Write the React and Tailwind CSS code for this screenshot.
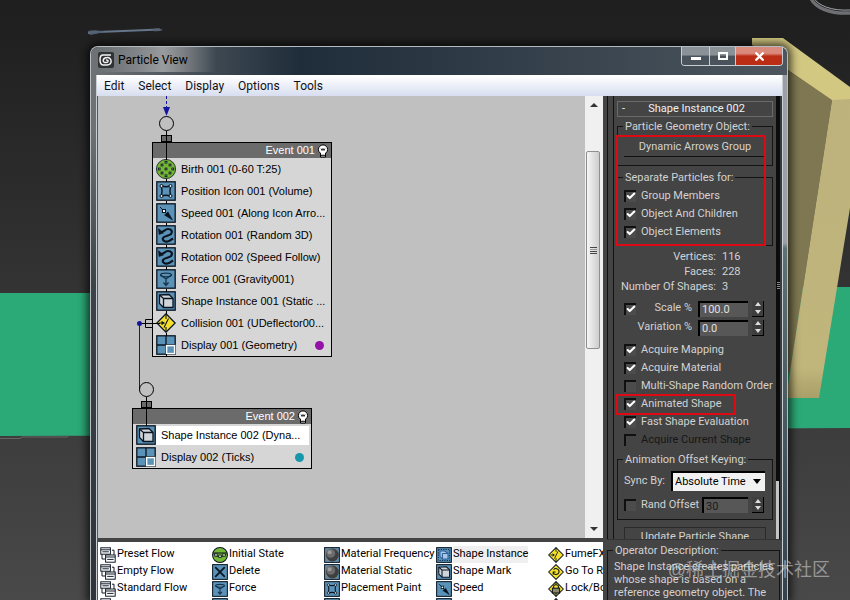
import { useState } from "react";
import { X, Check } from "lucide-react";

const menus = ["Edit", "Select", "Display", "Options", "Tools"];

const event1 = [
  { icon: "birth", label: "Birth 001 (0-60 T:25)" },
  { icon: "position", label: "Position Icon 001 (Volume)" },
  { icon: "speed", label: "Speed 001 (Along Icon Arro..." },
  { icon: "rotation", label: "Rotation 001 (Random 3D)" },
  { icon: "rotation", label: "Rotation 002 (Speed Follow)" },
  { icon: "force", label: "Force 001 (Gravity001)" },
  { icon: "shape", label: "Shape Instance 001 (Static ..." },
  { icon: "collision", label: "Collision 001 (UDeflector00..." },
  { icon: "display", label: "Display 001 (Geometry)", dot: "bg-[#9412a8]" },
];

const event2 = [
  { icon: "shape", label: "Shape Instance 002 (Dyna...", selected: true },
  { icon: "display", label: "Display 002 (Ticks)", dot: "bg-[#1798aa]" },
];

const depot = [
  [["flow", "Preset Flow"], ["flow", "Empty Flow"], ["flow", "Standard Flow"], ["flow", ""]],
  [["initial", "Initial State"], ["delete", "Delete"], ["force", "Force"], ["position", ""]],
  [["material", "Material Frequency"], ["material", "Material Static"], ["position", "Placement Paint"], ["delete", ""]],
  [["instance", "Shape Instance"], ["shape", "Shape Mark"], ["speed", "Speed"], ["force", ""]],
  [["collision", "FumeFX"], ["goto", "Go To R"], ["lock", "Lock/Bo"], ["collision", ""]],
];

const blueIcons = ["position", "speed", "rotation", "force", "shape", "display", "delete", "material", "instance"];
const yellowIcons = ["collision", "goto", "lock"];

// operator icons, all on a 20x20 grid
function OpIcon({ name, className }) {
  return (
    <svg viewBox="0 0 20 20" className={className} fill="none" stroke="#0a1420" strokeWidth="1.3">
      {blueIcons.includes(name) && <rect x="0.8" y="0.8" width="18.4" height="18.4" fill="#5b93b8" />}
      {yellowIcons.includes(name) && <path d="M10 .8 19.2 10 10 19.2 .8 10Z" fill="#f6e02c" />}
      {name === "birth" && (
        <>
          <circle cx="10" cy="10" r="9.6" fill="#74b636" strokeWidth="0.8" />
          <g fill="#e6f5c8" strokeWidth="0.9">
            {[[10, 3.2], [10, 10], [10, 16.8], [3.2, 10], [16.8, 10], [6, 6], [14, 6], [6, 14], [14, 14]].map(([x, y]) => (
              <rect key={x + "-" + y} x={x - 0.9} y={y - 0.9} width="1.8" height="1.8" />
            ))}
          </g>
        </>
      )}
      {name === "initial" && (
        <>
          <circle cx="10" cy="10" r="9.3" fill="#74b636" />
          <path d="M1.5 7.5H18.5" />
          <path d="M2.5 9C6 13 14 13 17.5 9" />
          <g fill="#dff0b8" strokeWidth="1">
            <rect x="3.5" y="8.5" width="3" height="3" />
            <rect x="8.5" y="10" width="3" height="3" />
            <rect x="13.5" y="8.5" width="3" height="3" />
          </g>
        </>
      )}
      {name === "position" && (
        <>
          <path d="M5.5 5Q10 6.500 14.5 5Q13.500 10 14.5 15Q10 13.500 5.5 15Q6.500 10 5.5 5Z" strokeWidth="1.4" />
          <g fill="#dfeaf3" strokeWidth="1">
            <circle cx="5.5" cy="5" r="1.5" />
            <circle cx="14.5" cy="5" r="1.5" />
            <circle cx="5.5" cy="15" r="1.5" />
            <circle cx="14.5" cy="15" r="1.5" />
          </g>
        </>
      )}
      {name === "speed" && (
        <>
          <path d="M4 4 11 11" strokeWidth="1" />
          <path d="M8.5 12 12 9 16.5 17Z" fill="#0a1420" strokeWidth="0.6" />
          <rect x="6.5" y="6.5" width="3" height="3" fill="#fff" strokeWidth="1" />
        </>
      )}
      {name === "rotation" && (
        <>
          <path d="M4 7C8 7.500 8.500 4 12 4C15.500 4 17 6.500 15 9C13 11 8.500 10.500 7 13C6 15.500 9 17 11.500 16.500C14 16 15.500 14.500 17 13.500" strokeWidth="2.2" />
          <path d="M2.500 3.500 3 9.500 7.500 8Z" fill="#0a1420" strokeWidth="0.5" />
        </>
      )}
      {name === "force" && (
        <>
          <ellipse cx="10" cy="6" rx="5.5" ry="1.8" stroke="#16334a" />
          <path d="M4.5 6 10 10 15.5 6M10 9V16M7.5 13.5 10 16.5 12.5 13.5" stroke="#16334a" />
        </>
      )}
      {name === "shape" && (
        <>
          <path d="M3.5 4 13 3.5 17 7.5V16.5H7.5L3.5 12.5Z" fill="#cfd5da" />
          <path d="M3.5 4 7.5 7.5V16.5M7.5 7.5H17" />
        </>
      )}
      {name === "instance" && (
        <>
          <rect x="3" y="3" width="14" height="14" strokeDasharray="1.5 1.5" stroke="#0d2e55" />
          <path d="M5 5H11L15 8V15H8L5 12Z" fill="#a9c7e4" stroke="#2a5f9c" />
          <path d="M8 8H15M8 8V15" stroke="#2a5f9c" />
        </>
      )}
      {name === "display" && (
        <>
          <path d="M10 1V19M1 10H19" />
          <rect x="10.6" y="10.6" width="8" height="8" stroke="#fff" strokeWidth="1.5" fill="#5b93b8" />
        </>
      )}
      {name === "delete" && <path d="M4 4 16 16M16 4 4 16" strokeWidth="2.2" />}
      {name === "material" && (
        <>
          <rect x="2" y="2" width="16" height="16" fill="#6f8794" stroke="none" />
          <circle cx="10.5" cy="10" r="8" fill="#3f3f3f" stroke="none" />
          <circle cx="8.5" cy="8" r="5.5" fill="#6c6c6c" stroke="none" />
          <circle cx="7" cy="6.5" r="2.5" fill="#9c9c9c" stroke="none" />
        </>
      )}
      {name === "collision" && <path d="M3 10H7.5M12.5 5.5 8 14.5M10 1V6M10 14V19M5.5 8.5 8 10 5.5 11.5" strokeWidth="1.1" />}
      {name === "goto" && <path d="M7 7C10 4 15 7 13.5 11C12 14.5 7 13.5 6.5 10.5M6.5 13V10H9.5" />}
      {name === "lock" && (
        <>
          <path d="M7 9V7C7 4 13 4 13 7V9M10 1V5M10 15V19" />
          <rect x="5.5" y="9" width="9" height="6" fill="#8b8b6a" />
        </>
      )}
      {name === "flow" && (
        <g fill="#fff" strokeWidth="1.2">
          <path d="M15 4H17.5V10M2.5 8V15H7" />
          <rect x="1" y="1" width="12" height="8" />
          <path d="M1 3.500H13M3 6H11" />
          <rect x="7" y="10" width="12" height="9" />
          <path d="M7 12.500H19M9 15.500H17" />
        </g>
      )}
    </svg>
  );
}

function Bulb() {
  return (
    <svg viewBox="0 0 12 14" className="h-[14px] w-3" fill="#fff" stroke="#000">
      <path d="M3.5 8.5H8.5V13H3.500Z" />
      <circle cx="6" cy="5.5" r="4.6" />
      <path d="M4 4.5 5 6.5 6 4.5 7 6.5 8 4.5" strokeWidth="0.8" fill="none" />
      <path d="M4 8.5H8V10.5H4Z" stroke="none" />
      <path d="M4 11.5H8" strokeWidth="0.8" />
    </svg>
  );
}

function EventNode({ title, items }) {
  return (
    <div className="w-[180px] border border-black bg-[#d6d6d6] font-['Liberation_Sans',Arial,sans-serif] text-[11px]">
      <div className="flex h-[15px] items-center justify-end gap-[2px] bg-[#6b6b6b] pr-[2px] text-white">
        <span>{title}</span>
        <Bulb />
      </div>
      <ul>
        {items.map((item) => (
          <li key={item.label} className="flex h-[22px] items-center pr-[7px] pl-[3px]">
            <OpIcon name={item.icon} className="size-5 shrink-0" />
            <span className={`flex h-[19px] flex-1 items-center pl-[5px] whitespace-nowrap text-black ${item.selected ? "-mr-[5px] bg-white" : ""}`}>
              {item.label}
            </span>
            {item.dot && <span className={`size-[9px] rounded-full ${item.dot}`} />}
          </li>
        ))}
      </ul>
    </div>
  );
}

function CheckRow({ label, defaultChecked, disabled }) {
  return (
    <label className={`flex h-[18px] items-center gap-[5px] whitespace-nowrap ${disabled ? "text-[#161616]" : ""}`}>
      <CheckBox defaultChecked={defaultChecked} disabled={disabled} />
      {label}
    </label>
  );
}

function CheckBox({ defaultChecked, disabled, label }) {
  return (
    <span className="relative flex size-3 shrink-0">
      <input
        type="checkbox"
        aria-label={label}
        defaultChecked={defaultChecked}
        disabled={disabled}
        className="peer size-3 appearance-none border-t-2 border-l-2 border-[#101010] bg-[#4c4c4c] disabled:bg-[#444]"
      />
      <Check className="pointer-events-none absolute top-[1px] left-[2px] hidden size-[10px] text-white peer-checked:block" strokeWidth={5} />
    </span>
  );
}

function Spinner({ id, value, width, dim }) {
  const [val, setVal] = useState(value);
  const step = (n) => setVal((v) => (Number(v) + n).toFixed(value.includes(".") ? 1 : 0));

  return (
    <span className="flex items-center gap-[4px]">
      <input
        id={id}
        value={val}
        onChange={(e) => setVal(e.target.value)}
        className={`h-4 border-t-2 border-l-2 border-black bg-[#575757] pl-[2px] leading-[14px] outline-none ${width} ${dim ? "text-[#1b1b1b]" : "text-[#e0e0e0]"}`}
      />
      <span className="flex h-4 w-3 flex-col border-r border-b border-black bg-[#3e3e3e]">
        <button aria-label="Increase" onClick={() => step(1)} className="flex flex-1 items-center justify-center">
          <svg viewBox="0 0 6 4" className="h-1 w-[6px]" fill="#ddd"><path d="M0 4 3 0 6 4Z" /></svg>
        </button>
        <button aria-label="Decrease" onClick={() => step(-1)} className="flex flex-1 items-center justify-center">
          <svg viewBox="0 0 6 4" className="h-1 w-[6px]" fill="#ddd"><path d="M0 0 3 4 6 0Z" /></svg>
        </button>
      </span>
    </span>
  );
}

function Group({ title, className, children }) {
  return (
    <fieldset className={`min-w-0 border border-[#141414] px-[6px] ${className}`}>
      <legend className="-ml-[1px] px-[2px] leading-[13px]">{title}</legend>
      {children}
    </fieldset>
  );
}

// 3D viewport behind the window
function Viewport() {
  return (
    <svg viewBox="0 0 850 600" preserveAspectRatio="xMidYMid slice" className="absolute inset-0 h-full w-full">
      <defs>
        <linearGradient id="bg" x1="0" y1="0" x2="0" y2="1">
          <stop offset="0" stopColor="#1e1e1e" />
          <stop offset="0.5" stopColor="#343434" />
          <stop offset="0.75" stopColor="#3e3e3e" />
          <stop offset="1" stopColor="#494949" />
        </linearGradient>
        <linearGradient id="face" x1="0" y1="0" x2="0" y2="1">
          <stop offset="0" stopColor="#bdb27c" />
          <stop offset="0.9" stopColor="#c0b57b" />
          <stop offset="1" stopColor="#a99f68" />
        </linearGradient>
      </defs>
      <rect width="850" height="600" fill="url(#bg)" />
      <path d="M0 293H400V435L0 436Z" fill="#2ba976" />
      <path d="M400 287H850V428L400 430Z" fill="#2ba976" />
      <path d="M0 438.5H20L22 437H67L69 435.5" stroke="#666" fill="none" />
      <path d="M752 38H783L850 87V101H832L752 45Z" fill="#d3c882" />
      <path d="M752 45 832 100 790 372 752 372Z" fill="#7e7751" />
      <path d="M832 100 850 99V208L819 398H786Z" fill="url(#face)" />
      <path d="M810 -4C814 8 830 14 850 13" stroke="#6e6f72" strokeWidth="3.5" fill="none" />
      <path d="M813 -3C818 6 832 11 850 10" stroke="#a5a7aa" fill="none" />
      <path d="M88 33 98 32 160 29.5" stroke="#65758a" strokeWidth="1.8" fill="none" />
      <path d="M88 31Q96 29 105 32L90 35ZM153 29Q158 27 163 30Q158 32 153 31Z" fill="#536173" />
    </svg>
  );
}

function TitleBar() {
  return (
    <header className="flex h-7 shrink-0 items-start rounded-t-lg bg-linear-to-r from-[#6f7376] via-[#1f2d3a] via-30% to-[#4d565e] pl-[7px]">
      <div className="flex h-[25px] items-center gap-[4px] bg-linear-to-r from-transparent via-[#999c9e] via-55% to-transparent pr-7">
        <svg viewBox="0 0 16 16" className="size-4" fill="none" stroke="#f2f2f2" strokeWidth="1.5">
          <rect width="16" height="16" rx="2" fill="#2f3335" stroke="none" />
          <path d="M13 3H5C1 3 1 12 5 13H9C15 13 14 5 9 5.5C5 5.5 4 10 7 10.5C11 11 11 7.5 8 8" />
        </svg>
        <h1 className="text-[12px] text-black">Particle View</h1>
      </div>
      <div className="mr-[4px] ml-auto flex h-[19px] overflow-hidden rounded-b-[4px] border border-t-0 border-[#c9ced2] text-white">
        <button aria-label="Minimize" className="flex w-[28px] items-end justify-center border-r border-[#c9ced2] bg-linear-to-b from-[#8a9197] from-45% to-[#4a535b] to-50% pb-[5px]">
          <span className="h-[3px] w-[10px] bg-white" />
        </button>
        <button aria-label="Maximize" className="flex w-[26px] items-center justify-center border-r border-[#c9ced2] bg-linear-to-b from-[#8a9197] from-45% to-[#4a535b] to-50%">
          <span className="h-[8px] w-[10px] border-2 border-white" />
        </button>
        <button aria-label="Close" className="flex w-[46px] items-center justify-center bg-linear-to-b from-[#d98a7c] from-35% to-[#bc2d16] to-50%">
          <X className="size-[13px]" strokeWidth={4.5} />
        </button>
      </div>
    </header>
  );
}

function Canvas() {
  return (
    <div className="relative min-w-0 flex-1 overflow-hidden bg-[#c0c0c0]">
      <div className="absolute top-[46px] left-[54px]">
        <EventNode title="Event 001" items={event1} />
      </div>
      <div className="absolute top-[312px] left-[34px]">
        <EventNode title="Event 002" items={event2} />
      </div>
      {/* wires */}
      <svg className="pointer-events-none absolute top-0 left-0 h-[380px] w-[260px]" fill="none" stroke="#000">
        <path d="M68.5 0V13" stroke="#1414a0" strokeDasharray="3 2" />
        <path d="M65 11H72L68.5 20Z" fill="#1414a0" stroke="none" />
        <rect x="63.5" y="39.5" width="10" height="6" fill="#6b6b6b" />
        <circle cx="68.5" cy="27.5" r="7" />
        <path d="M68.5 35V64M68.5 83V86M68.5 105V108M68.5 127V130M68.5 149V152M68.5 171V174M68.5 193V196M68.5 215V218M68.5 237V240M68.5 258V261" />
        <path d="M41.5 227V294" stroke="#1414a0" />
        <circle cx="41.5" cy="227.5" r="2.5" fill="#1414a0" stroke="none" />
        <path d="M44 227.5H62" />
        <path d="M47.5 223.5H54.5V231.5H47.5Z" />
        <rect x="43.5" y="305.5" width="10" height="6" fill="#6b6b6b" />
        <circle cx="48.5" cy="293.5" r="7" />
        <path d="M48.5 301V330" />
      </svg>
    </div>
  );
}

function ScrollBar() {
  return (
    <div className="flex w-[18px] shrink-0 flex-col items-center justify-between bg-[#f0f0f0]">
      <button aria-label="Scroll up" className="flex h-[18px] w-full items-center justify-center">
        <svg viewBox="0 0 8 4" className="h-1 w-2" fill="#333"><path d="M0 4 4 0 8 4Z" /></svg>
      </button>
      <div className="flex w-full flex-1 flex-col">
        <div className="basis-[9%]" />
        <div className="mr-[3px] ml-[1px] flex basis-[49%] flex-col items-center justify-center gap-[1px] rounded-[2px] border border-[#8f8f8f] bg-linear-to-r from-[#f6f6f6] to-[#cdcdcd]">
          <span className="h-px w-[7px] bg-[#444]" />
          <span className="h-px w-[7px] bg-[#999]" />
          <span className="h-px w-[7px] bg-[#444]" />
          <span className="h-px w-[7px] bg-[#444]" />
        </div>
      </div>
      <button aria-label="Scroll down" className="flex h-[18px] w-full items-center justify-center">
        <svg viewBox="0 0 8 4" className="h-1 w-2" fill="#333"><path d="M0 0 4 4 8 0Z" /></svg>
      </button>
    </div>
  );
}

function Rollout() {
  return (
    <div className="flex min-h-0 flex-1 overflow-hidden border-l border-[#111]">
      <div className="ml-[5px] min-w-0 flex-1 border-l border-[#111] px-[3px] pt-[5px]">
        <button className="flex h-4 w-full items-center border border-[#6a6a6a] px-1 text-[#f0f0f0]">
          <span>-</span>
          <span className="flex-1 text-center">Shape Instance 002</span>
        </button>

        <div className="relative">
          <Group title="Particle Geometry Object:" className="mt-[3px] pb-2">
            <button className="mt-[4px] flex h-5 w-full items-center justify-center border-b border-[#111] pt-[2px]">
              Dynamic Arrows Group
            </button>
          </Group>
          <Group title="Separate Particles for:" className="mt-[5px] pb-1">
            <div className="pt-[3px]">
              <CheckRow label="Group Members" defaultChecked />
              <CheckRow label="Object And Children" defaultChecked />
              <CheckRow label="Object Elements" defaultChecked />
            </div>
          </Group>
          <div className="pointer-events-none absolute top-[15px] right-[7px] bottom-0 -left-[1px] border-2 border-[#dd0a14]" />
        </div>

        <dl className="mt-[3px] grid grid-cols-[99px_1fr] gap-x-[6px] text-right leading-[15px]">
          <dt>Vertices:</dt>
          <dd className="text-left">116</dd>
          <dt>Faces:</dt>
          <dd className="text-left">228</dd>
          <dt className="whitespace-nowrap">Number Of Shapes:</dt>
          <dd className="text-left">3</dd>
        </dl>

        <div className="mt-[5px] flex h-[19px] items-center pl-[7px]">
          <CheckBox label="Use scale" defaultChecked />
          <label htmlFor="scale" className="mr-[6px] flex-1 text-right">Scale %</label>
          <Spinner id="scale" value="100.0" width="w-[50px]" />
          <span className="w-[9px]" />
        </div>
        <div className="flex h-[19px] items-center pl-[7px]">
          <label htmlFor="variation" className="mr-[6px] flex-1 text-right">Variation %</label>
          <Spinner id="variation" value="0.0" width="w-[50px]" />
          <span className="w-[9px]" />
        </div>

        <div className="mt-[4px] pl-[7px]">
          <CheckRow label="Acquire Mapping" defaultChecked />
          <CheckRow label="Acquire Material" defaultChecked />
          <CheckRow label="Multi-Shape Random Order" />
          <div className="relative">
            <CheckRow label="Animated Shape" defaultChecked />
            <div className="pointer-events-none absolute -top-[1px] -bottom-[2px] -left-2 w-[120px] border-2 border-[#dd0a14]" />
          </div>
          <CheckRow label="Fast Shape Evaluation" defaultChecked />
          <CheckRow label="Acquire Current Shape" disabled />
        </div>

        <Group title="Animation Offset Keying:" className="mt-[4px] pb-[5px]">
          <div className="mt-[5px] flex items-center justify-between">
            <label htmlFor="sync">Sync By:</label>
            <span className="relative mr-[1px] flex w-[94px]">
              <select id="sync" className="h-5 w-full appearance-none border-t-2 border-l-2 border-black bg-[#f1f1f1] pl-[2px] text-black">
                <option>Absolute Time</option>
                <option>Particle Age</option>
                <option>Event Duration</option>
              </select>
              <svg viewBox="0 0 8 5" className="pointer-events-none absolute top-2 right-1 h-[5px] w-2"><path d="M0 0 4 5 8 0Z" /></svg>
            </span>
          </div>
          <div className="mt-[5px] flex h-[18px] items-center justify-between pr-[2px]">
            <CheckRow label="Rand Offset" />
            <Spinner id="offset" value="30" width="w-[46px]" dim />
          </div>
        </Group>
        <button className="mx-[7px] mt-[7px] flex h-5 w-[calc(100%-14px)] items-center justify-center border border-[#2a2a2a] whitespace-nowrap">
          Update Particle Shape
        </button>
      </div>
      <div className="relative flex w-1 flex-col bg-[#0c0c0c]">
        <div className="mt-auto h-[58px] w-[3px] bg-[#c4c4c4]" />
        <div className="absolute top-[186px] flex w-full flex-col items-center gap-[1px]">
          <span className="h-px w-[3px] bg-[#888]" />
          <span className="h-px w-[3px] bg-[#888]" />
          <span className="h-px w-[3px] bg-[#888]" />
          <span className="h-px w-[3px] bg-[#888]" />
        </div>
      </div>
      <div className="w-[2px] bg-[#3a3a3a]" />
    </div>
  );
}

function Depot() {
  return (
    <div className="grid min-w-0 flex-1 grid-cols-[repeat(5,112px)] overflow-hidden bg-white pt-[4px] pl-[2px] text-black">
      {depot.map((col, i) => (
        <ul key={i}>
          {col.map(([icon, label]) => (
            <li key={label} className="flex h-[17px] items-center gap-[1px] whitespace-nowrap">
              <OpIcon name={icon} className="size-4 shrink-0" />
              <span className={icon === "instance" ? "bg-[#efefef]" : ""}>{label}</span>
            </li>
          ))}
        </ul>
      ))}
    </div>
  );
}

function App() {
  return (
    <div className="relative h-screen overflow-hidden bg-[#333] font-[Roboto,Tahoma,sans-serif] text-[11px]">
      <Viewport />

      <main className="relative flex h-full pt-[46px] pr-[62px] pl-[90px]">
        <div className="flex min-w-0 flex-1 flex-col rounded-t-lg border border-b-0 border-[#b4bcc2] bg-[#3a4650] shadow-[0_0_9px_3px_rgba(0,0,0,0.7)]">
          <TitleBar />
          <div className="flex min-h-0 flex-1">
            {/* glass edges */}
            <div className="w-[5px] shrink-0 bg-linear-to-b from-[#6e7275] from-10% via-[#3d4447] via-40% to-[#2e343a]" />
            <div className="flex min-w-0 flex-1 flex-col border-x border-[#c9ced3]">
              <nav className="flex h-[21px] shrink-0 items-center border-t border-white bg-linear-to-b from-white to-[#d8def0] text-[12px] text-[#101018]">
                {menus.map((m) => (
                  <button key={m} className="px-[7px]">{m}</button>
                ))}
              </nav>
              <div className="flex min-h-0 flex-1">
                <div className="flex min-w-0 flex-1 flex-col border-l border-[#555]">
                  <div className="flex min-h-0 flex-1">
                    <Canvas />
                    <ScrollBar />
                  </div>
                  <div className="h-1 shrink-0 bg-[#444]" />
                  <div className="flex h-[58px] shrink-0">
                    <Depot />
                  </div>
                </div>
                <aside className="flex w-[179px] shrink-0 flex-col bg-[#444] pl-1 text-[#d2d2d2]">
                  <Rollout />
                  <div className="h-[61px] shrink-0 overflow-hidden border-t border-[#333] pt-1 pr-[2px]">
                    <Group title="Operator Description:" className="h-20">
                      <p className="mt-[3px] leading-[13px] whitespace-nowrap">
                        Shape Instance creates particles<br />
                        whose shape is based on a<br />
                        reference geometry object. The
                      </p>
                    </Group>
                  </div>
                </aside>
              </div>
            </div>
            <div className="w-[4px] shrink-0 bg-linear-to-b from-[#9aa0a5] from-32% via-[#5d7274] via-33% to-[#34424e]" />
          </div>
        </div>
      </main>

      <p className="pointer-events-none absolute right-5 bottom-4 font-['Liberation_Sans','Noto_Sans_CJK_SC',sans-serif] text-[18px] text-white/45">
        @稀土掘金技术社区
      </p>
    </div>
  );
}

export default App;
